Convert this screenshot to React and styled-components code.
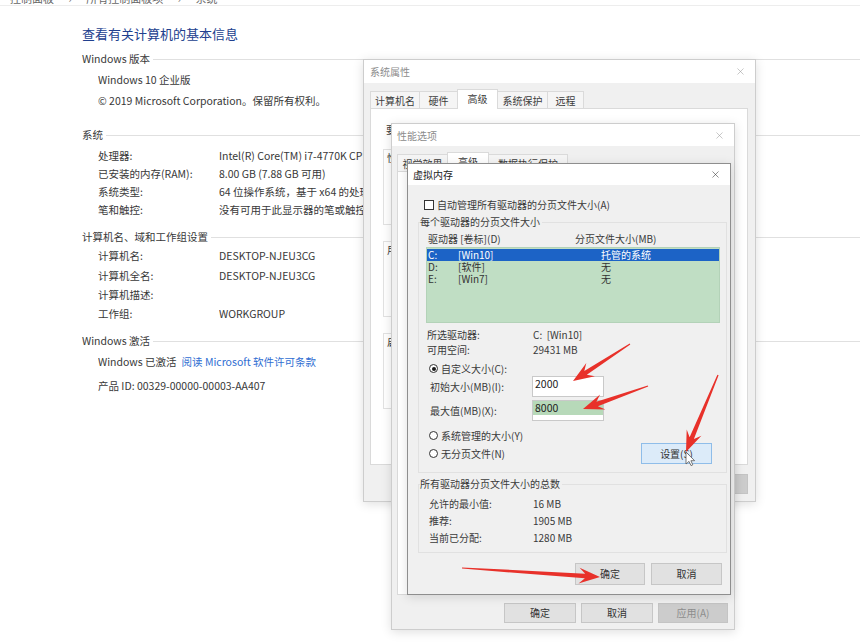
import React from "react";
import styled, { createGlobalStyle } from "styled-components";
import { X } from "lucide-react";

const GlobalStyle = createGlobalStyle`
  html, body {
    margin: 0;
    padding: 0;
    background: #fff;
  }
  body {
    font-family: "Noto Sans CJK SC", "Noto Sans", sans-serif;
    color: #383838;
  }
`;

const Page = styled.div`
  position: relative;
  width: 860px;
  height: 643px;
  overflow: hidden;
  background: #fff;
`;

const Breadcrumb = styled.div`
  height: 5px;
  overflow: hidden;
  border-bottom: 1px solid #ededed;
  span {
    display: block;
    margin-top: -9px;
    padding-left: 10px;
    font-size: 11px;
    line-height: 14px;
    color: #666;
    word-spacing: 12px;
  }
`;

const Content = styled.div`
  padding-left: 82px;
`;

const Title = styled.h1`
  margin: 18px 0 0;
  font-size: 13px;
  line-height: 20px;
  font-weight: normal;
  color: #21408e;
`;

const Heading = styled.div`
  display: flex;
  align-items: center;
  margin-top: ${(p) => p.$mt}px;
  font-size: 10.5px;
  line-height: 16px;
  white-space: nowrap;
  &::after {
    content: "";
    flex: 1;
    height: 1px;
    background: #e0e0e0;
    margin-left: 3px;
  }
`;

const Rows = styled.div`
  display: grid;
  grid-template-columns: 121px 144px;
  padding: ${(p) => p.$pt}px 0 0 16px;
  line-height: ${(p) => p.$lh}px;
  font-size: 10.5px;
  white-space: nowrap;
  & > div {
    overflow: hidden;
  }
`;

const Wide = styled.div`
  grid-column: 1 / -1;
`;

const Link = styled.span`
  color: #2f6ed2;
  margin-left: 5px;
`;

/* dialogs */

const Window = styled.div`
  position: absolute;
  left: ${(p) => p.$x}px;
  top: ${(p) => p.$y}px;
  width: ${(p) => p.$w}px;
  height: ${(p) => p.$h}px;
  z-index: ${(p) => p.$z};
  box-sizing: border-box;
  display: flex;
  flex-direction: column;
  background: #f0f0f0;
  border: 1px solid ${(p) => (p.$active ? "#8e8e8e" : "#cdcdcd")};
  box-shadow: 0 2px 10px rgba(0, 0, 0, 0.13);
  font-size: 10px;
  color: #3a3a3a;
`;

const TitleBar = styled.div`
  flex: none;
  height: ${(p) => p.$h}px;
  background: #fff;
  display: flex;
  align-items: center;
  justify-content: space-between;
  padding: 0 9px 0 ${(p) => p.$pl}px;
  font-size: 10px;
  color: ${(p) => (p.$active ? "#222" : "#8c8c8c")};
  svg {
    color: ${(p) => (p.$active ? "#333" : "#9a9a9a")};
  }
`;

const TabStrip = styled.div`
  flex: none;
  display: flex;
  align-items: flex-end;
  margin: ${(p) => p.$mt}px 0 -1px ${(p) => p.$ml}px;
  position: relative;
  z-index: 1;
`;

const Tab = styled.div`
  box-sizing: border-box;
  width: ${(p) => p.$w}px;
  height: ${(p) => (p.$active ? 20 : 18)}px;
  line-height: ${(p) => (p.$active ? 18 : 17)}px;
  text-align: center;
  background: ${(p) => (p.$active ? "#fff" : "#f5f5f5")};
  border: 1px solid #dadada;
  border-bottom: ${(p) => (p.$active ? "none" : "1px solid #dadada")};
  margin-right: -1px;
  color: #3c3c3c;
  white-space: nowrap;
`;

const TabPanel = styled.div`
  flex: none;
  box-sizing: border-box;
  height: ${(p) => p.$h}px;
  margin: 0 ${(p) => p.$mr}px 0 ${(p) => p.$ml}px;
  background: #fff;
  border: 1px solid #dadada;
  padding: 14px 0 0 12px;
  overflow: hidden;
`;

const PanelNote = styled.div`
  padding-left: 3px;
  line-height: 14px;
  white-space: nowrap;
`;

const PanelGroup = styled.div`
  margin-top: ${(p) => p.$mt}px;
  height: ${(p) => p.$h}px;
  width: 340px;
  border: 1px solid #e2e2e2;
  span {
    display: inline-block;
    margin: -8px 0 0 3px;
    background: #fff;
    line-height: 14px;
  }
`;

const ButtonRow = styled.div`
  flex: none;
  display: flex;
  justify-content: flex-end;
  gap: ${(p) => p.$gap}px;
  margin: ${(p) => p.$mt}px ${(p) => p.$mr}px 0 0;
`;

const Button = styled.div`
  box-sizing: border-box;
  width: ${(p) => p.$w}px;
  height: ${(p) => p.$h}px;
  line-height: ${(p) => p.$h - 2}px;
  text-align: center;
  font-size: 10px;
  background: ${(p) => (p.$disabled ? "#cccccc" : p.$hot ? "#dcebf9" : "#e1e1e1")};
  border: 1px solid ${(p) => (p.$disabled ? "#c4c4c4" : p.$hot ? "#8fbde9" : "#c6c6c6")};
  color: ${(p) => (p.$disabled ? "#8d8d8d" : "#333")};
`;

/* virtual memory body */

const VmBody = styled.div`
  display: flex;
  flex-direction: column;
  padding: 13px 3px 0 10px;
`;

const CheckRow = styled.div`
  display: flex;
  align-items: center;
  gap: 3px;
  margin-left: 6px;
  line-height: 14px;
  white-space: nowrap;
`;

const Box = styled.span`
  box-sizing: border-box;
  width: 10px;
  height: 10px;
  border: 1px solid #333;
  background: #fff;
`;

const Group = styled.div`
  margin-top: ${(p) => p.$mt}px;
  border: 1px solid #e1e1e1;
  padding: 0 6px ${(p) => p.$pb}px 7px;
  display: flex;
  flex-direction: column;
`;

const GroupLabel = styled.div`
  align-self: flex-start;
  margin: -8px 0 0 -6px;
  padding-right: 2px;
  line-height: 14px;
  background: #f0f0f0;
  white-space: nowrap;
`;

const ColHeads = styled.div`
  display: grid;
  grid-template-columns: 147px 1fr;
  margin-top: 3px;
  padding-left: 2px;
  line-height: 14px;
`;

const DriveList = styled.div`
  box-sizing: border-box;
  margin-top: 1px;
  height: 76px;
  background: #c0dec4;
  border: 1px solid #b3d2b8;
  padding-top: 1px;
`;

const DriveRow = styled.div`
  display: grid;
  grid-template-columns: 30px 143px 1fr;
  padding-left: 1px;
  line-height: 12px;
  background: ${(p) => (p.$sel ? "#1c63c6" : "transparent")};
  color: ${(p) => (p.$sel ? "#fff" : "#333")};
`;

const InfoGrid = styled.div`
  display: grid;
  grid-template-columns: ${(p) => p.$col}px 1fr;
  margin-top: ${(p) => p.$mt}px;
  padding-left: ${(p) => p.$pl}px;
  line-height: ${(p) => p.$lh}px;
  white-space: nowrap;
`;

const RadioRow = styled.div`
  display: flex;
  align-items: center;
  gap: 3px;
  margin-top: ${(p) => p.$mt || 0}px;
  padding-left: 3px;
  line-height: 15px;
  white-space: nowrap;
`;

const Radio = styled.span`
  box-sizing: border-box;
  width: 9px;
  height: 9px;
  border-radius: 50%;
  border: 1px solid #333;
  background: #fff;
  display: flex;
  align-items: center;
  justify-content: center;
  &::after {
    content: "";
    width: 4px;
    height: 4px;
    border-radius: 50%;
    background: ${(p) => (p.$on ? "#1a1a1a" : "transparent")};
  }
`;

const FieldRow = styled.div`
  display: grid;
  grid-template-columns: 102px 72px;
  align-items: center;
  margin-top: ${(p) => p.$mt}px;
  padding-left: 4px;
  height: 21px;
  white-space: nowrap;
`;

const Field = styled.div`
  box-sizing: border-box;
  height: 21px;
  border: 1px solid #c9c9c9;
  padding: 0 2px;
  font-size: 10.5px;
  line-height: 14px;
  color: #222;
  background: ${(p) =>
    p.$sel ? "linear-gradient(#b7d9b9 0 14px, #fff 14px)" : "#fff"};
`;

const ChoiceRow = styled.div`
  display: flex;
  align-items: flex-end;
  justify-content: space-between;
  margin-top: 7px;
  padding-right: 8px;
`;

const Radios = styled.div`
  display: flex;
  flex-direction: column;
  gap: 3px;
  padding-bottom: 3px;
`;

/* overlay */

const Overlay = styled.svg`
  position: absolute;
  left: 0;
  top: 0;
  z-index: 10;
  pointer-events: none;
`;

const arrowPoints = (x1, y1, x2, y2, hl = 21, hw = 8) => {
  const len = Math.hypot(x2 - x1, y2 - y1);
  const ux = (x2 - x1) / len;
  const uy = (y2 - y1) / len;
  const nx = -uy;
  const ny = ux;
  const bx = x2 - ux * hl;
  const by = y2 - uy * hl;
  const kx = x2 - ux * (hl - 6);
  const ky = y2 - uy * (hl - 6);
  const pts = [
    [x1 + nx * 0.6, y1 + ny * 0.6],
    [kx + nx * 2.3, ky + ny * 2.3],
    [bx + nx * hw, by + ny * hw],
    [x2, y2],
    [bx - nx * hw, by - ny * hw],
    [kx - nx * 2.3, ky - ny * 2.3],
    [x1 - nx * 0.6, y1 - ny * 0.6],
  ];
  return pts.map((p) => p.map((v) => v.toFixed(1)).join(",")).join(" ");
};

const arrows = [
  [630, 344, 573, 381],
  [648, 386, 583, 409],
  [718, 375, 686, 452],
  [462, 568, 600, 577],
];

const systemRows = [
  ["处理器:", "Intel(R) Core(TM) i7-4770K CPU @ 3.50GHz"],
  ["已安装的内存(RAM):", "8.00 GB (7.88 GB 可用)"],
  ["系统类型:", "64 位操作系统，基于 x64 的处理器"],
  ["笔和触控:", "没有可用于此显示器的笔或触控输入"],
];

const nameRows = [
  ["计算机名:", "DESKTOP-NJEU3CG"],
  ["计算机全名:", "DESKTOP-NJEU3CG"],
  ["计算机描述:", ""],
  ["工作组:", "WORKGROUP"],
];

const drives = [
  ["C:", "[Win10]", "托管的系统"],
  ["D:", "[软件]", "无"],
  ["E:", "[Win7]", "无"],
];

const Close = () => <X size={11} strokeWidth={1.2} />;

const App = () => {
  return (
    <Page>
      <GlobalStyle />
      <Breadcrumb>
        <span>控制面板 › 所有控制面板项 › 系统</span>
      </Breadcrumb>

      <Content>
        <Title>查看有关计算机的基本信息</Title>

        <Heading $mt={7}>Windows 版本</Heading>
        <Rows $pt={1.5} $lh={21}>
          <Wide>Windows 10 企业版</Wide>
          <Wide>© 2019 Microsoft Corporation。保留所有权利。</Wide>
        </Rows>

        <Heading $mt={16.5}>系统</Heading>
        <Rows $pt={4} $lh={18}>
          {systemRows.map(([k, v]) => (
            <React.Fragment key={k}>
              <div>{k}</div>
              <div>{v}</div>
            </React.Fragment>
          ))}
        </Rows>

        <Heading $mt={10}>计算机名、域和工作组设置</Heading>
        <Rows $pt={1.3} $lh={19.33}>
          {nameRows.map(([k, v]) => (
            <React.Fragment key={k}>
              <div>{k}</div>
              <div>{v}</div>
            </React.Fragment>
          ))}
        </Rows>

        <Heading $mt={9.4}>Windows 激活</Heading>
        <Rows $pt={1} $lh={24}>
          <Wide>
            Windows 已激活<Link>阅读 Microsoft 软件许可条款</Link>
          </Wide>
          <Wide>产品 ID: 00329-00000-00003-AA407</Wide>
        </Rows>
      </Content>

      <Window $x={363} $y={59} $w={393} $h={443} $z={1}>
        <TitleBar $h={23} $pl={6}>
          <span>系统属性</span>
          <Close />
        </TitleBar>
        <TabStrip $mt={6} $ml={6}>
          <Tab $w={50}>计算机名</Tab>
          <Tab $w={39}>硬件</Tab>
          <Tab $w={41} $active>
            高级
          </Tab>
          <Tab $w={51}>系统保护</Tab>
          <Tab $w={37}>远程</Tab>
        </TabStrip>
        <TabPanel $h={357} $ml={6} $mr={7}>
          <PanelNote>要进行大多数更改</PanelNote>
          <PanelGroup $mt={12} $h={74}>
            <span>性能</span>
          </PanelGroup>
          <PanelGroup $mt={16} $h={74}>
            <span>用户配置文件</span>
          </PanelGroup>
          <PanelGroup $mt={16} $h={74}>
            <span>启动和故障恢复</span>
          </PanelGroup>
        </TabPanel>
        <ButtonRow $mt={9} $mr={7} $gap={6}>
          <Button $w={70} $h={20}>
            确定
          </Button>
          <Button $w={70} $h={20}>
            取消
          </Button>
          <Button $w={70} $h={20} $disabled>
            应用(A)
          </Button>
        </ButtonRow>
      </Window>

      <Window $x={391} $y={123} $w={344} $h={507} $z={2}>
        <TitleBar $h={22} $pl={5}>
          <span>性能选项</span>
          <Close />
        </TitleBar>
        <TabStrip $mt={6} $ml={5}>
          <Tab $w={51}>视觉效果</Tab>
          <Tab $w={42} $active>
            高级
          </Tab>
          <Tab $w={80}>数据执行保护</Tab>
        </TabStrip>
        <TabPanel $h={424} $ml={5} $mr={5} />
        <ButtonRow $mt={8} $mr={6} $gap={5}>
          <Button $w={72} $h={20}>
            确定
          </Button>
          <Button $w={72} $h={20}>
            取消
          </Button>
          <Button $w={70} $h={20} $disabled>
            应用(A)
          </Button>
        </ButtonRow>
      </Window>

      <Window $x={407} $y={163} $w={324} $h={432} $z={3} $active>
        <TitleBar $h={21} $pl={5} $active>
          <span>虚拟内存</span>
          <Close />
        </TitleBar>
        <VmBody>
          <CheckRow>
            <Box />
            自动管理所有驱动器的分页文件大小(A)
          </CheckRow>

          <Group $mt={10} $pb={8}>
            <GroupLabel>每个驱动器的分页文件大小</GroupLabel>
            <ColHeads>
              <span>驱动器 [卷标](D)</span>
              <span>分页文件大小(MB)</span>
            </ColHeads>
            <DriveList>
              {drives.map(([d, l, s], i) => (
                <DriveRow key={d} $sel={i === 0}>
                  <span>{d}</span>
                  <span>{l}</span>
                  <span>{s}</span>
                </DriveRow>
              ))}
            </DriveList>
            <InfoGrid $col={106} $mt={4} $pl={1} $lh={15}>
              <span>所选驱动器:</span>
              <span>C:&nbsp;&nbsp;[Win10]</span>
              <span>可用空间:</span>
              <span>29431 MB</span>
            </InfoGrid>
            <RadioRow $mt={4}>
              <Radio $on />
              自定义大小(C):
            </RadioRow>
            <FieldRow $mt={0}>
              <span>初始大小(MB)(I):</span>
              <Field>2000</Field>
            </FieldRow>
            <FieldRow $mt={3}>
              <span>最大值(MB)(X):</span>
              <Field $sel>8000</Field>
            </FieldRow>
            <ChoiceRow>
              <Radios>
                <RadioRow>
                  <Radio />
                  系统管理的大小(Y)
                </RadioRow>
                <RadioRow>
                  <Radio />
                  无分页文件(N)
                </RadioRow>
              </Radios>
              <Button $w={71} $h={21} $hot>
                设置(S)
              </Button>
            </ChoiceRow>
          </Group>

          <Group $mt={11} $pb={6}>
            <GroupLabel>所有驱动器分页文件大小的总数</GroupLabel>
            <InfoGrid $col={104} $mt={4} $pl={3} $lh={17}>
              <span>允许的最小值:</span>
              <span>16 MB</span>
              <span>推荐:</span>
              <span>1905 MB</span>
              <span>当前已分配:</span>
              <span>1280 MB</span>
            </InfoGrid>
          </Group>

          <ButtonRow $mt={10} $mr={5} $gap={6}>
            <Button $w={70} $h={22}>
              确定
            </Button>
            <Button $w={71} $h={22}>
              取消
            </Button>
          </ButtonRow>
        </VmBody>
      </Window>

      <Overlay width="860" height="643" viewBox="0 0 860 643">
        {arrows.map((a, i) => (
          <polygon key={i} points={arrowPoints(...a)} fill="#e8312a" />
        ))}
        <path
          d="M686 452 L686 464 L689 461.4 L691 465.6 L692.8 464.8 L690.9 460.7 L694.6 460.7 Z"
          fill="#fff"
          stroke="#555"
          strokeWidth="0.8"
          strokeLinejoin="round"
        />
      </Overlay>
    </Page>
  );
};

export default App;
